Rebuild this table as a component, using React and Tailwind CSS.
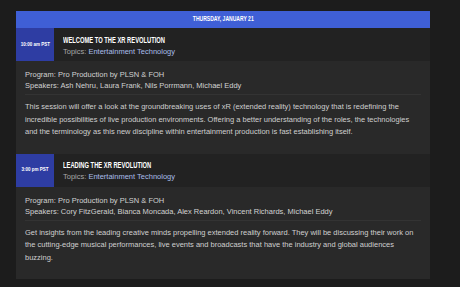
const sessions = [
  {
    time: "10:00 am PST",
    title: "WELCOME TO THE XR REVOLUTION",
    program: "Pro Production by PLSN & FOH",
    speakers: "Ash Nehru, Laura Frank, Nils Porrmann, Michael Eddy",
    body:
      "This session will offer a look at the groundbreaking uses of xR (extended reality) technology that is redefining the incredible possibilities of live production environments. Offering a better understanding of the roles, the technologies and the terminology as this new discipline within entertainment production is fast establishing itself.",
  },
  {
    time: "3:00 pm PST",
    title: "LEADING THE XR REVOLUTION",
    program: "Pro Production by PLSN & FOH",
    speakers: "Cory FitzGerald, Bianca Moncada, Alex Reardon, Vincent Richards, Michael Eddy",
    body:
      "Get insights from the leading creative minds propelling extended reality forward. They will be discussing their work on the cutting-edge musical performances, live events and broadcasts that have the industry and global audiences buzzing.",
  },
];

function Session({ s }) {
  return (
    <div>
      <div className="flex h-[33px] bg-[#222222]">
        <div className="w-[38px] bg-[#2e3da3] flex items-center justify-center text-white text-[5px] font-bold">
          <span className="inline-block scale-x-90">{s.time}</span>
        </div>
        <div className="flex flex-col justify-center pl-[9px] pt-[2px]">
          <div className="font-bold text-[8.4px] leading-[11px] text-white whitespace-nowrap">
            <span className="inline-block origin-left scale-x-[0.69]">{s.title}</span>
          </div>
          <div className="text-[7.5px] leading-[11px] text-[#a8a8a8]">
            Topics: <span className="text-[#a9bde9]">Entertainment Technology</span>
          </div>
        </div>
      </div>
      <div className="bg-[#292929] px-[9px] pt-[8px] pb-[15px]">
        <div className="text-[7.5px] leading-[11px] text-[#d2d2d2]">
          <div>Program: {s.program}</div>
          <div>Speakers: {s.speakers}</div>
        </div>
        <div className="mt-[3px] border-t border-[#333333]" />
        <p className="mt-[6px] text-[7.5px] leading-[12.5px] text-[#cfcfcf]">{s.body}</p>
      </div>
    </div>
  );
}

export default function App() {
  return (
    <div className="w-[460px] h-[287px] bg-[#1c1c1c] pt-[11px] font-['Liberation_Sans',Arial,sans-serif]">
      <div className="ml-[16px] w-[414px]">
        <div className="h-[17px] bg-[#3f5fd6] flex items-center justify-center font-bold text-[7px] text-white">
          <span className="inline-block scale-x-[0.72]">THURSDAY, JANUARY 21</span>
        </div>
        {sessions.map((s) => (
          <Session key={s.time} s={s} />
        ))}
      </div>
    </div>
  );
}
